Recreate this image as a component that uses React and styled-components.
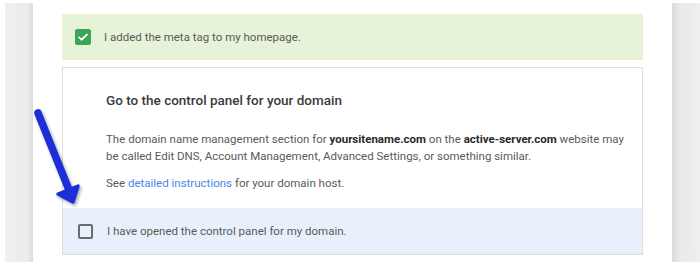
import styled, { createGlobalStyle } from "styled-components";

const Global = createGlobalStyle`
  html, body {
    margin: 0;
    padding: 0;
    background: #ffffff;
  }
  body {
    font-family: Roboto, "Liberation Sans", Arial, sans-serif;
  }
`;

const Page = styled.div`
  position: relative;
  display: flex;
  flex-direction: row;
  width: 700px;
  height: 265px;
  padding: 3px 0 3px 5px;
  box-sizing: border-box;
  overflow: hidden;
`;

const SideStrip = styled.div`
  width: ${(p) => p.$width}px;
  flex-shrink: 0;
  background: ${(p) =>
    p.$side === "left"
      ? "linear-gradient(to right, #efefef 0%, #ececec 80%, #dcdcdc 100%)"
      : "linear-gradient(to right, #dadada 0%, #e9e9e9 25%, #efefef 100%)"};
`;

const Main = styled.div`
  flex: 1;
  min-width: 0;
  background: #fff;
  padding: 11px 29px 0 29px;
  display: flex;
  flex-direction: column;
  gap: 7px;
  & > * {
    flex-shrink: 0;
  }
`;

const Banner = styled.div`
  display: flex;
  align-items: center;
  gap: 13px;
  height: 46px;
  padding-left: 13px;
  background: #e6f3d9;
  font-size: 11.5px;
  color: #5a5a5a;
`;

const CheckedBox = styled.div`
  width: 16px;
  height: 16px;
  border-radius: 2px;
  background: #3aa757;
  display: flex;
  align-items: center;
  justify-content: center;
`;

const Card = styled.div`
  border: 1px solid #dedede;
  display: flex;
  flex-direction: column;
`;

const CardBody = styled.div`
  padding: 22px 10px 16px 43px;
`;

const Heading = styled.h2`
  margin: 0 0 21px 0;
  font-size: 13.5px;
  line-height: 20px;
  font-weight: 500;
  color: #3a3a3a;
`;

const Text = styled.p`
  margin: 0 0 10px 0;
  font-size: 11.5px;
  line-height: 17px;
  color: #5a5a5a;
  &:last-child {
    margin-bottom: 0;
  }
  b {
    color: #2a2a2a;
    font-weight: 700;
  }
`;

const Link = styled.a`
  color: #4a86e8;
  text-decoration: none;
`;

const TaskRow = styled.div`
  display: flex;
  align-items: center;
  gap: 14px;
  height: 46px;
  padding-left: 15px;
  background: #e8f1fb;
  font-size: 11.5px;
  color: #5a5a5a;
`;

const EmptyBox = styled.div`
  width: 15px;
  height: 15px;
  box-sizing: border-box;
  border: 2px solid #6b6b6b;
  border-radius: 2px;
`;

const Arrow = styled.svg`
  position: absolute;
  left: 28px;
  top: 104px;
  overflow: visible;
`;

export default function App() {
  return (
    <>
      <Global />
      <Page>
        <SideStrip $side="left" $width={28} />
        <Main>
          <Banner>
            <CheckedBox>
              <svg width="12" height="12" viewBox="0 0 24 24">
                <path
                  d="M4 12.5l5 5L20 7"
                  fill="none"
                  stroke="#fff"
                  strokeWidth="3.5"
                  strokeLinecap="round"
                  strokeLinejoin="round"
                />
              </svg>
            </CheckedBox>
            I added the meta tag to my homepage.
          </Banner>
          <Card>
            <CardBody>
              <Heading>Go to the control panel for your domain</Heading>
              <Text>
                The domain name management section for <b>yoursitename.com</b> on the{" "}
                <b>active-server.com</b> website may be called Edit DNS, Account
                Management, Advanced Settings, or something similar.
              </Text>
              <Text>
                See <Link href="#">detailed instructions</Link> for your domain host.
              </Text>
            </CardBody>
            <TaskRow>
              <EmptyBox />
              I have opened the control panel for my domain.
            </TaskRow>
          </Card>
        </Main>
        <SideStrip $side="right" $width={28} />
        <Arrow width="60" height="110" viewBox="0 0 60 110">
          <defs>
            <filter id="sh" x="-50%" y="-50%" width="200%" height="200%">
              <feDropShadow dx="1.5" dy="2" stdDeviation="1.5" floodColor="#000" floodOpacity="0.35" />
            </filter>
          </defs>
          <g filter="url(#sh)">
            <line
              x1="10"
              y1="9"
              x2="41"
              y2="86"
              stroke="#1c2fd6"
              strokeWidth="7.5"
              strokeLinecap="round"
            />
            <path d="M30 90 L45 98 L50 82 Z" fill="#1c2fd6" stroke="#1c2fd6" strokeWidth="3.5" strokeLinejoin="round" />
          </g>
        </Arrow>
      </Page>
    </>
  );
}
